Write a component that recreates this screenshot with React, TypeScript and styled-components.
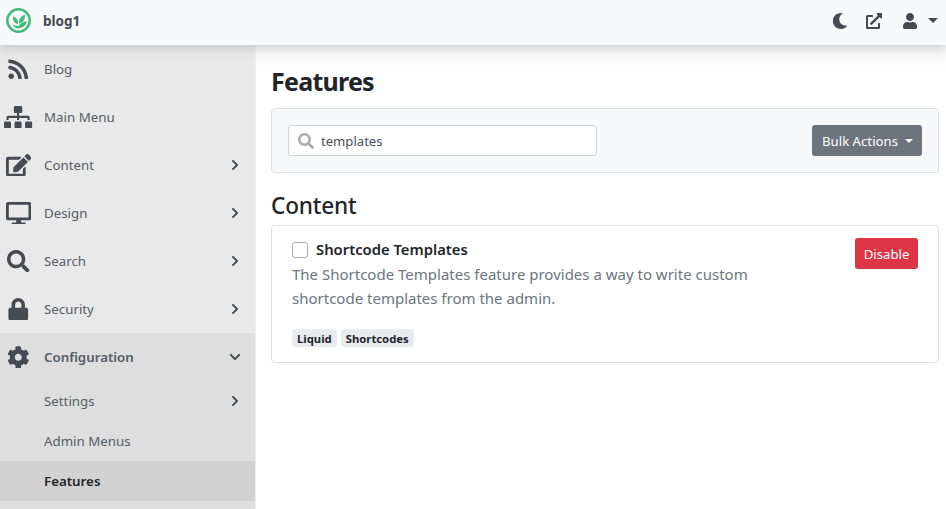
import React from "react";
import styled, { createGlobalStyle } from "styled-components";
import {
  FaRss,
  FaSitemap,
  FaEdit,
  FaDesktop,
  FaSearch,
  FaLock,
  FaCog,
  FaMoon,
  FaExternalLinkAlt,
  FaUser,
  FaChevronRight,
  FaChevronDown,
} from "react-icons/fa";

const GlobalStyle = createGlobalStyle`
  html, body {
    margin: 0;
    height: 100%;
    overflow: hidden;
    background: #fff;
    font-family: "Noto Sans", "Open Sans", sans-serif;
  }
  * {
    box-sizing: border-box;
  }
`;

const Page = styled.div`
  display: flex;
  flex-direction: column;
  height: 509px;
  overflow: hidden;
`;

const Header = styled.header`
  position: relative;
  z-index: 2;
  flex: 0 0 45px;
  display: flex;
  align-items: center;
  padding: 0 8px 4px 6px;
  background: #f8f9fa;
  box-shadow: 0 2px 12px rgba(0, 0, 0, 0.18);
`;

const Brand = styled.div`
  display: flex;
  align-items: center;
  gap: 12px;
  font-size: 13.5px;
  font-weight: 700;
  color: #454b53;
`;

const HeaderIcons = styled.div`
  margin-left: auto;
  display: flex;
  align-items: center;
  color: #454b53;
  font-size: 16px;
`;

const HeaderIcon = styled.span<{ $gap: number }>`
  display: flex;
  margin-right: ${(p) => p.$gap}px;
`;

const Caret = styled.span<{ $color: string; $size: number }>`
  display: inline-block;
  width: 0;
  height: 0;
  border-top: ${(p) => p.$size}px solid ${(p) => p.$color};
  border-left: ${(p) => p.$size}px solid transparent;
  border-right: ${(p) => p.$size}px solid transparent;
`;

const Body = styled.div`
  flex: 1;
  display: flex;
  min-height: 0;
`;

const Sidebar = styled.nav`
  flex: 0 0 256px;
  background: #e9e9e9;
  border-right: 1px solid #efefef;
`;

const ConfigGroup = styled.div`
  background: #dedede;
  height: 100%;
`;

const MenuRow = styled.div<{ $sub?: boolean; $active?: boolean; $open?: boolean }>`
  display: flex;
  align-items: center;
  height: ${(p) => (p.$sub ? 40 : 48)}px;
  padding: ${(p) => (p.$sub ? "0 14px 0 44px" : "0 14px 0 0")};
  background: ${(p) => (p.$active ? "#d2d2d2" : "transparent")};
  color: ${(p) => (p.$active ? "#212529" : "#555c66")};
  font-size: 13.3px;
  font-weight: ${(p) => (p.$active || p.$open ? 600 : 400)};
`;

const MenuIcon = styled.span<{ $ratio?: number }>`
  flex: 0 0 44px;
  display: flex;
  justify-content: center;
  padding-right: 7px;
  color: #454b53;
  font-size: 22.5px;

  svg {
    width: ${(p) => p.$ratio ?? 1}em;
    height: 1em;
    flex: none;
  }
`;

const MenuLabel = styled.span`
  flex: 1;
`;

const Arrow = styled.span`
  display: flex;
  color: #454b53;
  font-size: 12px;
`;

const Main = styled.main`
  flex: 1;
  padding: 18px 7px 0 15px;
  background: linear-gradient(#f4f4f4, #fff 24px);
`;

const Title = styled.h1`
  margin: 0 0 8px;
  font-size: 25px;
  line-height: 37px;
  font-weight: 700;
  letter-spacing: -0.75px;
  color: #212529;
`;

const Toolbar = styled.div`
  display: flex;
  align-items: center;
  justify-content: space-between;
  height: 65px;
  padding: 0 16px;
  background: #f8f9fa;
  border: 1px solid #dfe0e2;
  border-radius: 4px;
`;

const SearchBox = styled.div`
  display: flex;
  align-items: center;
  gap: 7px;
  width: 309px;
  height: 31px;
  padding: 0 9px;
  background: #fff;
  border: 1px solid #ced4da;
  border-radius: 3px;
  color: #adadad;
  font-size: 16px;
`;

const SearchInput = styled.input`
  flex: 1;
  min-width: 0;
  border: 0;
  outline: 0;
  padding: 0;
  background: transparent;
  font: inherit;
  font-size: 13.1px;
  color: #495057;
`;

const BulkButton = styled.button`
  display: flex;
  align-items: center;
  justify-content: center;
  gap: 7px;
  width: 110px;
  height: 31px;
  padding: 0 0 0 1px;
  border: 0;
  border-radius: 3px;
  background: #6c757d;
  color: #fff;
  font: inherit;
  font-size: 13.2px;
`;

const SectionTitle = styled.h2`
  margin: 16px 0 2px;
  font-size: 22.6px;
  line-height: 34px;
  font-weight: 500;
  letter-spacing: -0.2px;
  color: #212529;
`;

const Card = styled.section`
  display: flex;
  justify-content: space-between;
  height: 138px;
  padding: 12px 20px 0;
  border: 1px solid #dfe0e2;
  border-radius: 4px;
  background: #fff;
`;

const CardBody = styled.div`
  width: 490px;
`;

const CardHead = styled.label`
  display: flex;
  align-items: center;
  gap: 8px;
  height: 24px;
  font-size: 14.8px;
  font-weight: 600;
  color: #212529;
`;

const CardName = styled.span`
  margin-top: -3px;
`;

const CheckBox = styled.input`
  appearance: none;
  width: 16px;
  height: 16px;
  margin: 0;
  background: #fff;
  border: 1px solid #a9adb1;
  border-radius: 3px;
`;

const Description = styled.p`
  margin: 0 0 19px;
  font-size: 15px;
  line-height: 24px;
  color: #6c757d;
`;

const Tags = styled.div`
  display: flex;
  gap: 4px;
`;

const Tag = styled.span`
  display: flex;
  align-items: center;
  height: 18px;
  padding: 0 5px;
  background: #e9ecef;
  border-radius: 3px;
  font-size: 11.3px;
  font-weight: 700;
  color: #212529;
`;

const DangerButton = styled.button`
  width: 63px;
  height: 31px;
  padding: 0;
  border: 0;
  border-radius: 3px;
  background: #dc3545;
  color: #fff;
  font: inherit;
  font-size: 13.2px;
`;

const Logo = () => (
  <svg width="25" height="25" viewBox="0 0 25 25">
    <circle cx="12.5" cy="12.5" r="11.2" fill="#fff" stroke="#43b97a" strokeWidth="2.5" />
    <path d="M12 16C8.500 15.500 6.500 12.500 7 8.500 10.500 9.500 12.800 12.500 12 16z" fill="#43b97a" />
    <path d="M13 15.500C12.500 12 14.500 8 19 6.500 19.500 11 17.300 14.500 13 15.500z" fill="#43b97a" />
    <path d="M6.500 16.500C8.500 20.300 11.500 21 13.500 20 16.800 20 20 17.800 21 13.300 17.500 13.300 14.500 15 12.800 17.800 11 18 8.800 17.500 6.500 16.500z" fill="#43b97a" />
  </svg>
);

const topItems = [
  { label: "Blog", icon: <FaRss /> },
  { label: "Main Menu", icon: <FaSitemap />, ratio: 1.25 },
  { label: "Content", icon: <FaEdit />, ratio: 1.125, more: true },
  { label: "Design", icon: <FaDesktop />, ratio: 1.125, more: true },
  { label: "Search", icon: <FaSearch />, more: true },
  { label: "Security", icon: <FaLock />, more: true },
];

export default function App() {
  return (
    <Page>
      <GlobalStyle />
      <Header>
        <Brand>
          <Logo />
          blog1
        </Brand>
        <HeaderIcons>
          <HeaderIcon $gap={18}>
            <FaMoon />
          </HeaderIcon>
          <HeaderIcon $gap={20}>
            <FaExternalLinkAlt />
          </HeaderIcon>
          <HeaderIcon $gap={10}>
            <FaUser />
          </HeaderIcon>
          <Caret $color="#454b53" $size={5} />
        </HeaderIcons>
      </Header>
      <Body>
        <Sidebar>
          {topItems.map((item) => (
            <MenuRow key={item.label}>
              <MenuIcon $ratio={item.ratio}>{item.icon}</MenuIcon>
              <MenuLabel>{item.label}</MenuLabel>
              {item.more && (
                <Arrow>
                  <FaChevronRight />
                </Arrow>
              )}
            </MenuRow>
          ))}
          <ConfigGroup>
            <MenuRow $open>
              <MenuIcon>
                <FaCog />
              </MenuIcon>
              <MenuLabel>Configuration</MenuLabel>
              <Arrow>
                <FaChevronDown />
              </Arrow>
            </MenuRow>
            <MenuRow $sub>
              <MenuLabel>Settings</MenuLabel>
              <Arrow>
                <FaChevronRight />
              </Arrow>
            </MenuRow>
            <MenuRow $sub>
              <MenuLabel>Admin Menus</MenuLabel>
            </MenuRow>
            <MenuRow $sub $active>
              <MenuLabel>Features</MenuLabel>
            </MenuRow>
          </ConfigGroup>
        </Sidebar>
        <Main>
          <Title>Features</Title>
          <Toolbar>
            <SearchBox>
              <FaSearch />
              <SearchInput defaultValue="templates" />
            </SearchBox>
            <BulkButton>
              Bulk Actions
              <Caret $color="#fff" $size={4.5} />
            </BulkButton>
          </Toolbar>
          <SectionTitle>Content</SectionTitle>
          <Card>
            <CardBody>
              <CardHead>
                <CheckBox type="checkbox" />
                <CardName>Shortcode Templates</CardName>
              </CardHead>
              <Description>
                The Shortcode Templates feature provides a way to write custom shortcode templates from the admin.
              </Description>
              <Tags>
                <Tag>Liquid</Tag>
                <Tag>Shortcodes</Tag>
              </Tags>
            </CardBody>
            <DangerButton>Disable</DangerButton>
          </Card>
        </Main>
      </Body>
    </Page>
  );
}
